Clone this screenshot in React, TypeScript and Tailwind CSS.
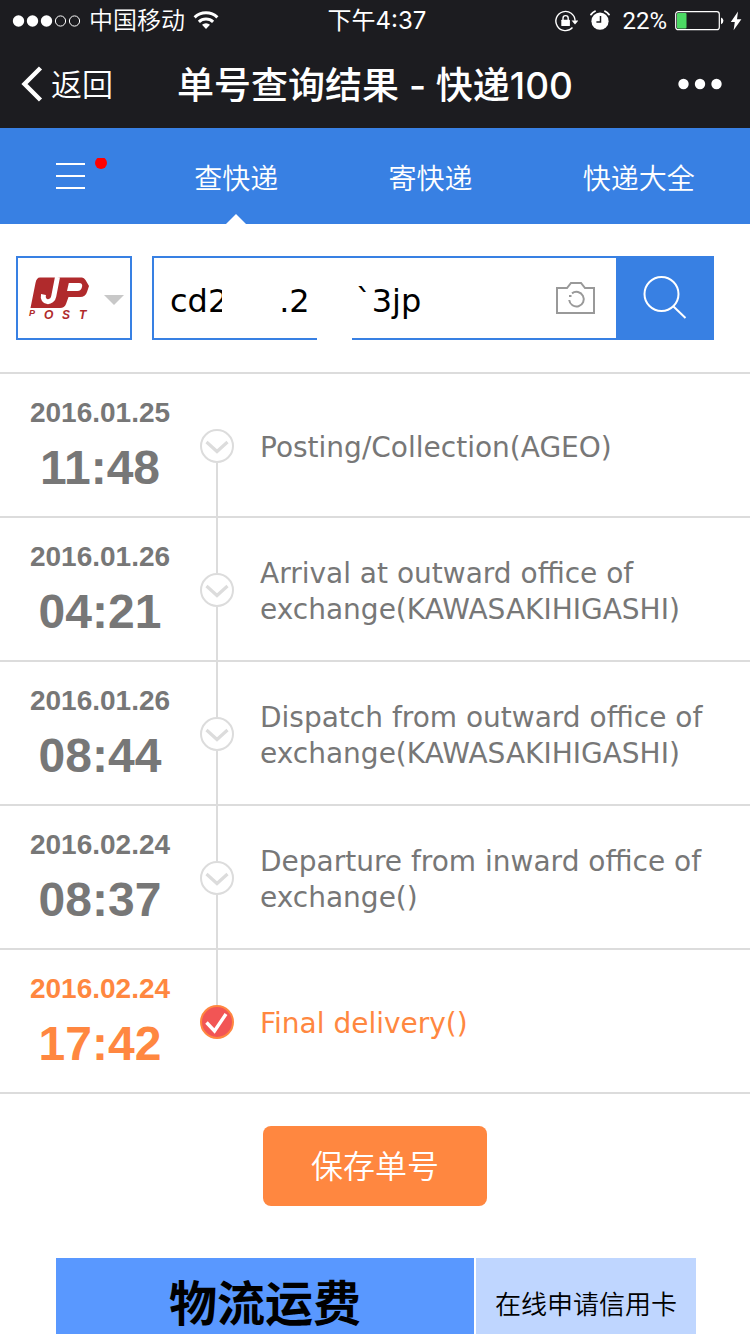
import React from "react";

const tabs = ["查快递", "寄快递", "快递大全"];

const events = [
  { date: "2016.01.25", time: "11:48", text: "Posting/Collection(AGEO)" },
  { date: "2016.01.26", time: "04:21", text: "Arrival at outward office of exchange(KAWASAKIHIGASHI)" },
  { date: "2016.01.26", time: "08:44", text: "Dispatch from outward office of exchange(KAWASAKIHIGASHI)" },
  { date: "2016.02.24", time: "08:37", text: "Departure from inward office of exchange()" },
  { date: "2016.02.24", time: "17:42", text: "Final delivery()" },
];

function StatusBar() {
  return (
    <div className="grid h-10 grid-cols-[1fr_auto_1fr] items-center pt-0.5 pr-2 pl-3 text-2xl leading-9">
      <div className="flex items-center">
        <svg className="mr-2 h-4 w-[69px]" viewBox="0 0 69 16" aria-hidden="true">
          <circle cx="6.5" cy="8" r="5.7" fill="#fff" />
          <circle cx="20.5" cy="8" r="5.7" fill="#fff" />
          <circle cx="34.5" cy="8" r="5.7" fill="#fff" />
          <circle cx="48.5" cy="8" r="5.1" fill="none" stroke="#fff" />
          <circle cx="62.5" cy="8" r="5.1" fill="none" stroke="#fff" />
        </svg>
        <span className="font-[350]">中国移动</span>
        <svg className="ml-2 h-5 w-[26px]" viewBox="0 0 26 20" aria-hidden="true">
          <g fill="none" stroke="#fff" strokeWidth="3">
            <path d="M1.6 6.4a16.4 16.4 0 0 1 22.8 0" />
            <path d="M5.9 10.8a10.2 10.2 0 0 1 14.2 0" />
          </g>
          <path d="M13 18l-4-4.2a5.8 5.8 0 0 1 8 0z" fill="#fff" />
        </svg>
      </div>
      <div className="text-center whitespace-nowrap">下午4:37</div>
      <div className="flex items-center justify-end">
        <svg className="mr-3 h-6 w-6" viewBox="0 0 24 24" aria-hidden="true">
          <path d="M18.5 18.6a9.6 9.6 0 1 1 2.6-6.8" fill="none" stroke="#fff" strokeWidth="1.4" />
          <path d="M17.6 11.5H24.4L21 15.4z" fill="#fff" />
          <rect x="7.3" y="10.7" width="8.6" height="6.3" rx=".6" fill="#fff" />
          <path d="M9 11V9.2a2.6 2.6 0 0 1 5.2 0V11" fill="none" stroke="#fff" strokeWidth="1.4" />
        </svg>
        <svg className="mr-3 h-6 w-5" viewBox="0 0 20 24" aria-hidden="true">
          <circle cx="10" cy="12.2" r="8.6" fill="#fff" />
          <path d="M10.5 7v6H6.4" fill="none" stroke="#1c1c20" strokeWidth="1.5" />
          <path d="M1 5.6a12 12 0 0 1 4-3.4M19 5.6a12 12 0 0 0-4-3.4" fill="none" stroke="#fff" strokeWidth="1.8" strokeLinecap="round" />
        </svg>
        <span className="font-[Roboto,sans-serif]">22%</span>
        <svg className="ml-2 h-5 w-[49px]" viewBox="0 0 49 20" aria-hidden="true">
          <rect x=".7" y=".7" width="43.6" height="18" rx="2.5" fill="none" stroke="#fff" strokeWidth="1.2" />
          <rect x="2" y="2" width="9.5" height="15.4" rx="1" fill="#4cd964" />
          <path d="M46 6.4a3.6 3.6 0 0 1 0 6.8z" fill="#fff" />
        </svg>
        <svg className="ml-1.5 h-5 w-3" viewBox="0 0 12 20" aria-hidden="true">
          <path d="M8 .5L.8 11h4L3.6 19.3 11.4 8.2H7z" fill="#fff" />
        </svg>
      </div>
    </div>
  );
}

function TitleBar() {
  return (
    <div className="grid h-[88px] grid-cols-[1fr_auto_1fr] items-center px-5">
      <a href="#back" className="flex items-center text-[31px] leading-10 font-[350]">
        <svg className="mr-[7px] h-9 w-6" viewBox="0 0 24 36" aria-hidden="true">
          <path d="M20.5 2L4.5 18l16 16" fill="none" stroke="#fff" strokeWidth="4.4" />
        </svg>
        <span className="pt-0.5">返回</span>
      </a>
      <h1 className="pt-1 text-[37px] leading-10 font-medium whitespace-nowrap">单号查询结果 - 快递100</h1>
      <button type="button" aria-label="更多" className="mr-2 justify-self-end">
        <svg className="h-3 w-11" viewBox="0 0 44 12" fill="#fff" aria-hidden="true">
          <circle cx="5.5" cy="6" r="5.2" />
          <circle cx="22" cy="6" r="5.2" />
          <circle cx="38.5" cy="6" r="5.2" />
        </svg>
      </button>
    </div>
  );
}

function Tabs() {
  return (
    <nav className="flex h-24 bg-[#3880e3] text-[28px] leading-10 font-[350] text-white">
      <button type="button" aria-label="菜单" className="w-[139px] pl-14">
        <svg className="h-9 w-[52px]" viewBox="0 0 52 36" aria-hidden="true">
          <path d="M0 6h29M0 18h29M0 30h29" stroke="#fff" strokeWidth="2" />
          <circle cx="45" cy="5" r="6" fill="#f00" />
        </svg>
      </button>
      {tabs.map((tab, i) => (
        <a key={tab} href="#tab" className="relative flex flex-auto items-center justify-center pt-1.5" aria-current={i === 0 ? "page" : undefined}>
          {tab}
          {i === 0 && (
            <svg className="absolute bottom-0 left-1/2 h-[10px] w-5 -translate-x-1/2" viewBox="0 0 20 10" aria-hidden="true">
              <path d="M0 10L10 0l10 10z" fill="#fff" />
            </svg>
          )}
        </a>
      ))}
    </nav>
  );
}

function JpPostLogo() {
  return (
    <svg className="h-12 w-16 shrink-0" viewBox="0 0 64 48" role="img" aria-label="JP POST">
      <path d="M14 3.5H56Q58 3.5 59.5 6L63 12L61 18Q59.5 23 54 23H42.5L40 30Q38.5 34 34 34H4.5L9.5 9Q10.5 3.5 14 3.5Z" fill="#b02a2c" />
      <path d="M31.500 3L27.800 22C26.500 30 15.500 29.500 17.500 20.500" fill="none" stroke="#fff" strokeWidth="5" />
      <path d="M42.8 9H53Q57 9 56 13Q55 17 51.5 17H41Z" fill="#fff" />
      <g fill="#b02a2c" fontStyle="italic" fontWeight="700" fontFamily="Liberation Sans, sans-serif">
        <text x="3" y="42" fontSize="9">P</text>
        <text x="18 36 53" y="45" fontSize="12">OST</text>
      </g>
    </svg>
  );
}

function SearchRow() {
  return (
    <form className="flex h-[148px] items-center pr-9 pl-4" onSubmit={(e) => e.preventDefault()}>
      <button type="button" aria-label="选择快递公司" className="mr-5 flex h-[84px] w-[116px] shrink-0 items-center justify-between border-2 border-[#3880e3] pr-1.5 pl-2">
        <JpPostLogo />
        <svg className="mt-1 h-[10px] w-5 shrink-0" viewBox="0 0 20 10" aria-hidden="true">
          <path d="M0 0h20L10 10z" fill="#c8c8c8" />
        </svg>
      </button>
      <div className="relative flex h-[84px] min-w-0 flex-1 items-center border-2 border-r-0 border-[#3880e3] pr-5 pl-4">
        <input
          aria-label="快递单号"
          defaultValue={"cd2\u00a0\u00a0\u00a0\u00a0\u00a0.2\u00a0\u00a0\u00a0\u00a0\u2006`3jp"}
          className="min-w-0 flex-1 bg-transparent pt-1.5 font-['DejaVu_Sans',sans-serif] text-[32px] leading-10 text-black outline-none"
        />
        <span className="absolute top-6 left-[68px] h-9 w-2 bg-white" />
        <span className="absolute -bottom-0.5 left-[163px] h-1 w-[35px] bg-white" />
        <button type="button" aria-label="拍照" className="shrink-0">
          <svg className="h-9 w-10" viewBox="0 0 40 36" fill="none" stroke="#999" strokeWidth="2" aria-hidden="true">
            <path d="M1 8h10l4-5h10l4 5h9v25H1z" />
            <path d="M16 13.4a7.3 7.3 0 1 1-2.8 6.6" />
            <path d="M13 16h2.5" />
          </svg>
        </button>
      </div>
      <button type="submit" aria-label="查询" className="flex h-[84px] w-[98px] shrink-0 items-center justify-center bg-[#3880e3]">
        <svg className="h-11 w-11" viewBox="0 0 44 44" fill="none" stroke="#fff" strokeWidth="2" aria-hidden="true">
          <circle cx="18.5" cy="18" r="17" />
          <path d="M30.5 30.5L42.5 42" />
        </svg>
      </button>
    </form>
  );
}

function Timeline() {
  return (
    <ol className="border-t-2 border-[#dcdcdc]">
      {events.map((e, i) => {
        const first = i === 0;
        const last = i === events.length - 1;
        return (
          <li key={i} className={`flex min-h-36 items-stretch border-b-2 border-[#dcdcdc] ${last ? "text-[#ff8740]" : "text-[#777]"}`}>
            <div className="flex w-[200px] flex-col items-center pt-[21px] font-['Liberation_Sans',Arial,sans-serif] font-bold">
              <span className="text-[28px] leading-9">{e.date}</span>
              <span className="pt-[7px] text-5xl leading-[60px]">{e.time}</span>
            </div>
            <div className="-mb-0.5 flex w-[34px] flex-col items-center">
              <span className={`h-[55px] w-0.5 ${first ? "" : "bg-[#dcdcdc]"}`} />
              <svg className="h-[34px] w-[34px]" viewBox="0 0 34 34" fill="none" aria-hidden="true">
                {last ? (
                  <>
                    <circle cx="17" cy="17" r="16" fill="#f25555" stroke="#ff8740" strokeWidth="2" />
                    <path d="M6.5 17.5l8 8.5L26 9" stroke="#fff" strokeWidth="3.4" />
                  </>
                ) : (
                  <>
                    <circle cx="17" cy="17" r="16" stroke="#dcdcdc" strokeWidth="2" />
                    <path d="M6.5 13L17 22.5 27.5 13" stroke="#dcdcdc" strokeWidth="3.2" />
                  </>
                )}
              </svg>
              <span className={`w-0.5 flex-1 ${last ? "" : "bg-[#dcdcdc]"}`} />
            </div>
            <p className="flex flex-1 items-center pt-1.5 pr-6 pl-[26px] font-['DejaVu_Sans',Verdana,sans-serif] text-[28px] leading-9">{e.text}</p>
          </li>
        );
      })}
    </ol>
  );
}

export default function App() {
  return (
    <div className="flex min-h-screen flex-col bg-white font-[Inter,'Noto_Sans_CJK_SC',sans-serif]">
      <header className="bg-[#1c1c20] text-white">
        <StatusBar />
        <TitleBar />
      </header>
      <Tabs />
      <SearchRow />
      <Timeline />
      <button type="button" className="mt-8 h-20 w-56 self-center rounded-lg bg-[#ff8740] pt-0.5 text-[32px] leading-10 font-[350] text-white">
        保存单号
      </button>
      <div className="mt-[52px] mr-[54px] ml-14 flex flex-1 gap-0.5 text-center text-black">
        <a href="#freight" className="flex-[19] bg-[#5998ff] pt-4 text-5xl leading-[60px] font-bold">物流运费</a>
        <a href="#credit" className="flex-[10] bg-[#bfd6ff] pt-[18px] text-[26px] leading-[58px] font-[350]">在线申请信用卡</a>
      </div>
    </div>
  );
}
